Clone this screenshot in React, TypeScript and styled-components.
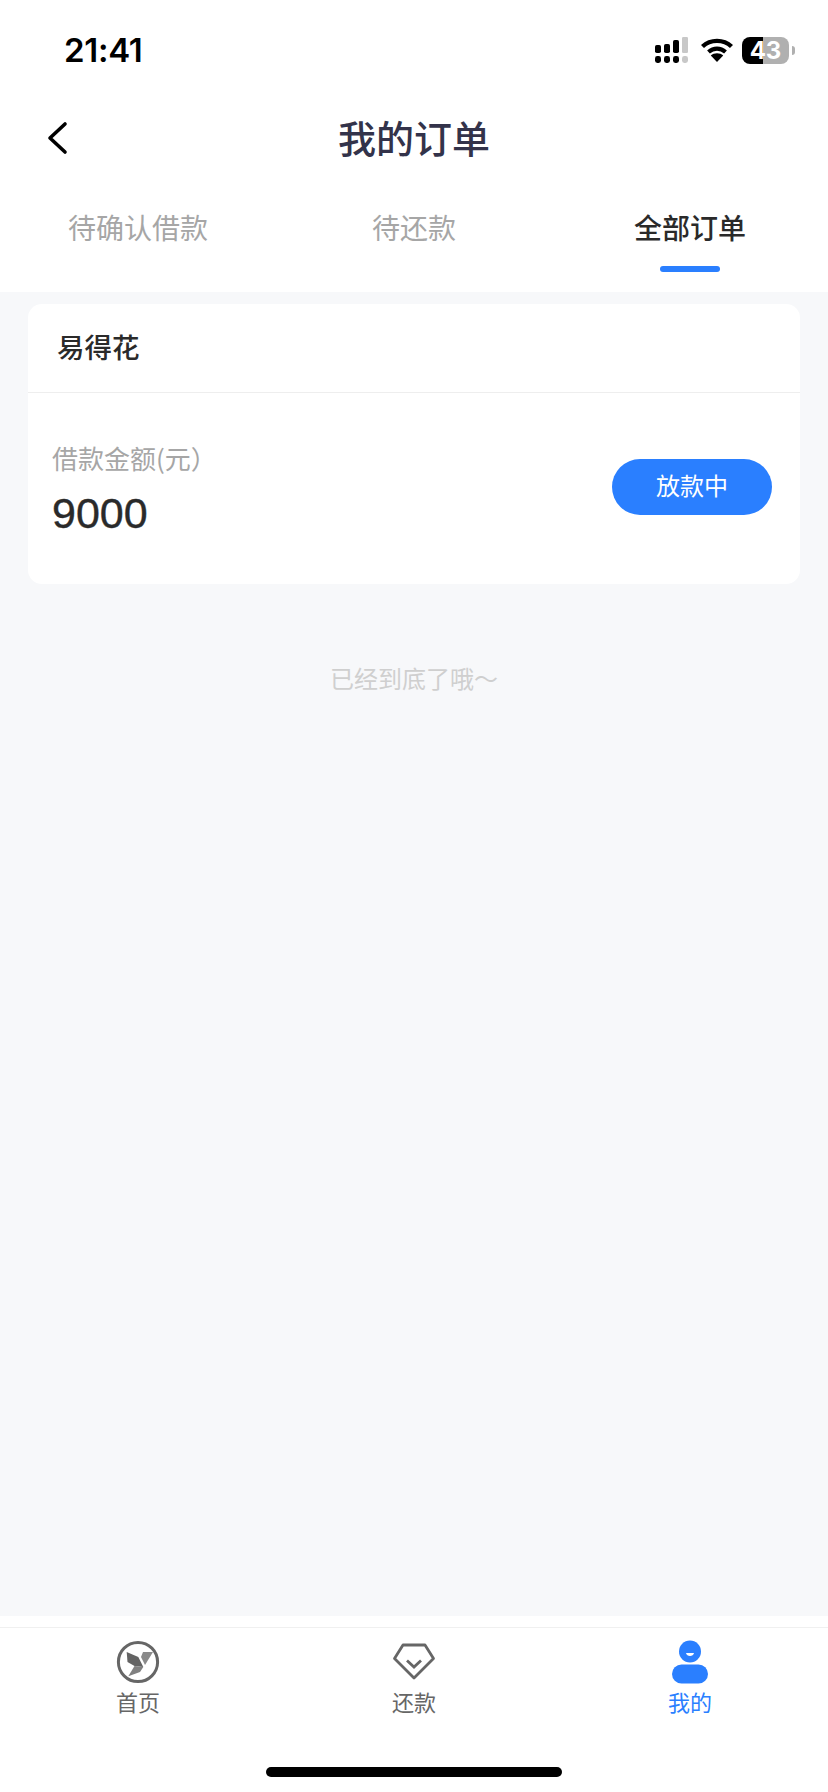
import React from 'react';
import styled, { createGlobalStyle } from 'styled-components';

const GlobalStyle = createGlobalStyle`
  html, body {
    margin: 0;
    padding: 0;
    background: #fff;
  }
  * { box-sizing: border-box; }
`;

const cjk = `"Noto Sans CJK SC", "Liberation Sans", sans-serif`;

const Page = styled.div`
  width: 828px;
  height: 1792px;
  display: flex;
  flex-direction: column;
  overflow: hidden;
  font-family: ${cjk};
`;

const Header = styled.header`
  height: 292px;
  flex: none;
  background: #fff;
`;

const StatusBar = styled.div`
  height: 100px;
  padding: 0 33px 0 64px;
  display: flex;
  align-items: center;
  justify-content: space-between;
`;

const Time = styled.span`
  font-family: Inter, "Liberation Sans", sans-serif;
  font-size: 33px;
  font-weight: 600;
  color: #000;
  letter-spacing: -0.3px;
`;

const StatusIcons = styled.div`
  display: flex;
  align-items: center;
`;

const Battery = styled.div`
  width: 47px;
  height: 27px;
  margin-left: 9px;
  border-radius: 8px;
  background: linear-gradient(90deg, #000 0 21px, #b0b0b0 21px);
  color: #fff;
  font-family: Inter, "Liberation Sans", sans-serif;
  font-size: 24px;
  font-weight: 700;
  line-height: 27px;
  text-align: center;
`;

const BatteryNub = styled.div`
  width: 3px;
  height: 9px;
  margin-left: 3px;
  border-radius: 0 3px 3px 0;
  background: #b0b0b0;
`;

const NavBar = styled.div`
  height: 76px;
  display: grid;
  grid-template-columns: 1fr auto 1fr;
  align-items: center;
  padding-left: 46px;
`;

const BackButton = styled.button`
  width: 24px;
  height: 36px;
  padding: 0;
  border: 0;
  background: none;
  display: flex;
`;

const Title = styled.h1`
  margin: 0 0 3px -46px;
  font-size: 38px;
  font-weight: 500;
  line-height: 50px;
  color: #33334a;
`;

const Tabs = styled.nav`
  display: grid;
  grid-template-columns: repeat(3, 276px);
  padding-top: 31px;
`;

const Tab = styled.div<{ $active?: boolean }>`
  display: flex;
  flex-direction: column;
  align-items: center;
  font-size: 28px;
  line-height: 40px;
  font-weight: ${(p) => (p.$active ? 500 : 400)};
  color: ${(p) => (p.$active ? '#2a2a2a' : '#a6a6a6')};
`;

const TabMark = styled.span<{ $active?: boolean }>`
  width: 60px;
  height: 6px;
  margin-top: 19px;
  border-radius: 3px;
  background: ${(p) => (p.$active ? '#2a7fff' : 'transparent')};
`;

const Content = styled.main`
  flex: 1;
  background: #f7f8fa;
  padding: 12px 28px 0;
`;

const OrderCard = styled.section`
  height: 280px;
  border-radius: 14px;
  background: #fff;
`;

const CardHead = styled.div`
  height: 89px;
  padding: 0 0 4px 29px;
  display: flex;
  align-items: center;
  border-bottom: 1px solid #eeeeee;
  font-size: 27.5px;
  font-weight: 500;
  color: #2a2a2a;
`;

const CardBody = styled.div`
  height: 191px;
  padding: 0 28px 4px 24px;
  display: flex;
  align-items: center;
  justify-content: space-between;
`;

const Amount = styled.div`
  display: flex;
  flex-direction: column;
  padding-top: 3px;
`;

const AmountLabel = styled.span`
  font-size: 26px;
  line-height: 36px;
  color: #a6a6a6;
`;

const AmountValue = styled.span`
  margin-top: 13px;
  font-family: "Liberation Sans", sans-serif;
  font-size: 43px;
  line-height: 48px;
  color: #2a2a2a;
  -webkit-text-stroke: 0.4px #2a2a2a;
`;

const StatusPill = styled.button`
  width: 160px;
  height: 56px;
  padding: 0 0 4px;
  border: 0;
  border-radius: 28px;
  background: #2a7fff;
  color: #fff;
  font-family: ${cjk};
  font-size: 24px;
  font-weight: 400;
`;

const EndNote = styled.p`
  margin: 77px 0 0;
  text-align: center;
  font-size: 24px;
  line-height: 34px;
  color: #cfcfcf;
`;

const Footer = styled.footer`
  height: 176px;
  flex: none;
  background: #fff;
  padding-top: 11px;
  display: flex;
  flex-direction: column;
`;

const TabBar = styled.div`
  display: grid;
  grid-template-columns: repeat(3, 276px);
  border-top: 1px solid #f0f0f0;
  padding-top: 12px;
`;

const TabBarItem = styled.div<{ $active?: boolean }>`
  display: flex;
  flex-direction: column;
  align-items: center;
  font-size: 22px;
  line-height: 30px;
  color: ${(p) => (p.$active ? '#2a7fff' : '#666')};
`;

const TabIcon = styled.svg`
  width: 44px;
  height: 44px;
  margin-bottom: 2px;
`;

const HomeIndicator = styled.div`
  width: 296px;
  height: 10px;
  margin: 51px auto 0;
  border-radius: 5px;
  background: #000;
`;

const SignalIcon = () => (
  <svg width="34" height="26" viewBox="0 0 34 26">
    <rect x="0" y="8" width="6" height="8" rx="1.8" fill="#000" />
    <rect x="9" y="7" width="6" height="9" rx="1.8" fill="#000" />
    <rect x="18" y="3" width="6" height="13" rx="1.8" fill="#000" />
    <rect x="27" y="0" width="6" height="16" rx="1.2" fill="#c8c8c8" />
    <rect x="0" y="19" width="6" height="7" rx="2.4" fill="#000" />
    <rect x="9" y="19" width="6" height="7" rx="2.4" fill="#000" />
    <rect x="18" y="19" width="6" height="7" rx="2.4" fill="#000" />
    <rect x="27" y="19" width="6" height="7" rx="2.4" fill="#c8c8c8" />
  </svg>
);

const WifiIcon = () => (
  <svg width="32" height="24" viewBox="0 0 32 24" style={{ marginLeft: 12 }}>
    <path d="M1.5 8.5 C9.5 1 22.5 1 30.5 8.5" fill="none" stroke="#000" strokeWidth="4.4" />
    <path d="M7.5 14 C12.5 9.6 19.5 9.6 24.5 14" fill="none" stroke="#000" strokeWidth="4.2" />
    <path d="M16 24 L9.8 17.6 C13 14.6 19 14.6 22.2 17.6 Z" fill="#000" />
  </svg>
);

const HomeIcon = () => (
  <TabIcon viewBox="0 0 44 44">
    <circle cx="22" cy="22" r="19.6" fill="none" stroke="#666" strokeWidth="3" />
    <path d="M10.7 12 L22.3 17 L27.3 27 L18.5 26 L11.5 22 Z" fill="#636363" />
    <path d="M18.5 26 L27.3 27 L24 32 L12.3 36.3 Z" fill="#808080" />
    <path d="M25 17 L27 12 L37 12 L29 25 Z" fill="#8a8a8a" />
  </TabIcon>
);

const RepayIcon = () => (
  <TabIcon viewBox="0 0 44 44">
    <path
      d="M11 5 H33 L41.5 18.5 L22 38 L2.5 18.5 Z"
      fill="none"
      stroke="#666"
      strokeWidth="2.8"
      strokeLinejoin="round"
    />
    <path d="M15 20.5 L22 27 L29 20.5" fill="none" stroke="#666" strokeWidth="2.8" />
  </TabIcon>
);

const MineIcon = () => (
  <TabIcon viewBox="0 0 44 44">
    <circle cx="22" cy="11.5" r="11" fill="#2a7fff" />
    <path d="M18 13 H26 C25.4 17 18.6 17 18 13 Z" fill="#fff" />
    <rect x="4" y="24.5" width="36" height="19" rx="9.5" fill="#2a7fff" />
  </TabIcon>
);

const App = () => {
  return (
    <Page>
      <GlobalStyle />
      <Header>
        <StatusBar>
          <Time>21:41</Time>
          <StatusIcons>
            <SignalIcon />
            <WifiIcon />
            <Battery>43</Battery>
            <BatteryNub />
          </StatusIcons>
        </StatusBar>
        <NavBar>
          <BackButton aria-label="back">
            <svg width="24" height="36" viewBox="0 0 24 36">
              <path d="M19 4 L4 18 L19 32" fill="none" stroke="#000" strokeWidth="3.6" strokeLinecap="round" strokeLinejoin="round" />
            </svg>
          </BackButton>
          <Title>我的订单</Title>
        </NavBar>
        <Tabs>
          <Tab>待确认借款<TabMark /></Tab>
          <Tab>待还款<TabMark /></Tab>
          <Tab $active>全部订单<TabMark $active /></Tab>
        </Tabs>
      </Header>
      <Content>
        <OrderCard>
          <CardHead>易得花</CardHead>
          <CardBody>
            <Amount>
              <AmountLabel>借款金额(元）</AmountLabel>
              <AmountValue>9000</AmountValue>
            </Amount>
            <StatusPill>放款中</StatusPill>
          </CardBody>
        </OrderCard>
        <EndNote>已经到底了哦～</EndNote>
      </Content>
      <Footer>
        <TabBar>
          <TabBarItem><HomeIcon />首页</TabBarItem>
          <TabBarItem><RepayIcon />还款</TabBarItem>
          <TabBarItem $active><MineIcon />我的</TabBarItem>
        </TabBar>
        <HomeIndicator />
      </Footer>
    </Page>
  );
};

export default App;
